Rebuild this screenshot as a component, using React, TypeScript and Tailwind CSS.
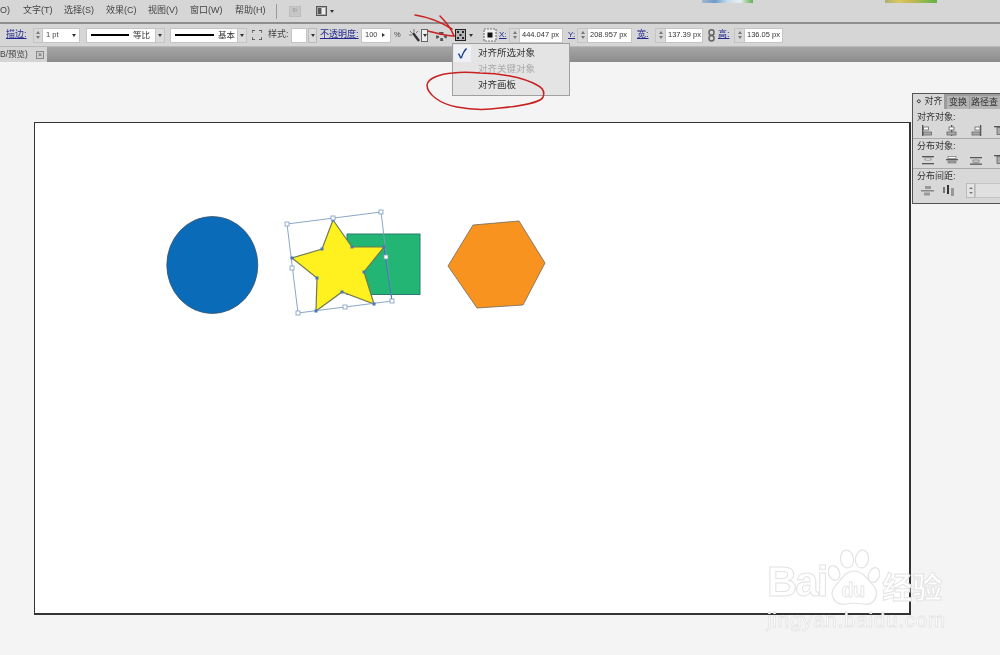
import React from "react";

const cjk = { fontFamily: '"Liberation Sans","Noto Sans CJK SC",sans-serif' };

function Spin({ w, text, ml }: { w: string; text: string; ml: string }) {
  return (
    <div className={`${w} ${ml} h-[15px] bg-white border border-[#c4c4c4] flex items-center shrink-0`}>
      <div className="w-[10px] h-full bg-[#d8d8d8] border-r border-[#c4c4c4] flex flex-col items-center justify-center gap-[2px]">
        <div className="w-0 h-0 border-x-[2px] border-x-transparent border-b-[3px] border-b-[#777]" />
        <div className="w-0 h-0 border-x-[2px] border-x-transparent border-t-[3px] border-t-[#777]" />
      </div>
      <span className="ml-[2px] text-[7.5px] text-[#333] whitespace-nowrap">{text}</span>
    </div>
  );
}

function Arrow({ className }: { className: string }) {
  return <div className={`w-0 h-0 border-x-[2.5px] border-x-transparent border-t-[3px] border-t-[#333] ${className}`} />;
}

function StrokeBox({ w, ml, label, thick, line }: { w: string; ml: string; label: string; thick: string; line: string }) {
  return (
    <div className={`${w} ${ml} h-[15px] flex shrink-0 border border-[#c4c4c4] bg-white`}>
      <div className="flex-1 flex items-center pl-[4px]">
        <div className={`${line} ${thick} bg-black shrink-0`} />
        <span className="ml-[4px] text-[8.5px] text-[#333]">{label}</span>
      </div>
      <div className="w-[9px] bg-[#dcdcdc] border-l border-[#c4c4c4] flex items-center justify-center">
        <Arrow className="" />
      </div>
    </div>
  );
}

function RefGlyph() {
  return (
    <svg width="14" height="14" viewBox="0 0 14 14" className="shrink-0">
      <rect x="1" y="1" width="12" height="12" fill="#f0f0f0" stroke="#777" strokeWidth="1.2" strokeDasharray="2 1" />
      <rect x="4.5" y="4.5" width="5" height="5" fill="#111" />
    </svg>
  );
}

function AlignKeyGlyph() {
  return (
    <svg width="11" height="12" viewBox="0 0 11 12" className="shrink-0">
      <rect x="0.5" y="0.5" width="10" height="11" fill="#b4b4b4" stroke="#222" strokeWidth="1" />
      <g fill="#222">
        <rect x="2" y="2" width="2" height="2" />
        <rect x="7" y="2" width="2" height="2" />
        <rect x="4.5" y="5" width="2" height="2" />
        <rect x="2" y="8" width="2" height="2" />
        <rect x="7" y="8" width="2" height="2" />
      </g>
    </svg>
  );
}

function PanelIcon({ kind }: { kind: number }) {
  return (
    <svg width="14" height="12" viewBox="0 0 14 12" className="shrink-0">
      {kind === 0 && <g><rect x="1" y="0" width="1.3" height="11" fill="#555" /><rect x="2.5" y="2" width="5" height="3" fill="#fff" stroke="#666" strokeWidth=".8" /><rect x="2.5" y="7" width="8" height="3" fill="#aaa" stroke="#666" strokeWidth=".8" /></g>}
      {kind === 1 && <g><rect x="6" y="0" width="1.3" height="11" fill="#555" /><rect x="4" y="2" width="5" height="3" fill="#fff" stroke="#666" strokeWidth=".8" /><rect x="2" y="7" width="9" height="3" fill="#aaa" stroke="#666" strokeWidth=".8" /></g>}
      {kind === 2 && <g><rect x="11" y="0" width="1.3" height="11" fill="#555" /><rect x="6" y="2" width="5" height="3" fill="#fff" stroke="#666" strokeWidth=".8" /><rect x="3" y="7" width="8" height="3" fill="#aaa" stroke="#666" strokeWidth=".8" /></g>}
      {kind === 3 && <g><rect x="1" y="1" width="12" height="1.3" fill="#555" /><rect x="4" y="2.5" width="6" height="7" fill="#aaa" stroke="#666" strokeWidth=".8" /></g>}
      {kind === 4 && <g><rect x="1" y="2" width="12" height="1.3" fill="#555" /><rect x="1" y="9" width="12" height="1.3" fill="#555" /><rect x="4" y="4" width="6" height="2" fill="#fff" stroke="#666" strokeWidth=".6" /></g>}
      {kind === 5 && <g><rect x="1" y="5" width="12" height="1.3" fill="#555" /><rect x="3" y="2.5" width="8" height="2" fill="#fff" stroke="#666" strokeWidth=".6" /><rect x="3" y="7" width="8" height="2" fill="#aaa" stroke="#666" strokeWidth=".6" /></g>}
      {kind === 6 && <g><rect x="1" y="9.5" width="12" height="1.3" fill="#555" /><rect x="1" y="3" width="12" height="1.3" fill="#555" /><rect x="4" y="6" width="6" height="2.5" fill="#ccc" stroke="#666" strokeWidth=".6" /></g>}
      {kind === 7 && <g><rect x="0" y="5" width="13" height="1.5" fill="#888" /><rect x="4" y="1" width="6" height="3" fill="#999" /><rect x="3" y="7.5" width="6" height="3" fill="#999" /></g>}
      {kind === 8 && <g><rect x="1" y="2" width="2" height="6" fill="#777" /><rect x="5" y="0" width="2" height="9" fill="#333" /><rect x="9" y="3" width="3" height="8" fill="#999" /></g>}
    </svg>
  );
}

export default function App() {
  return (
    <div className="relative w-[1000px] h-[655px] overflow-hidden bg-[#f4f4f4] select-none blur-[0.35px]" style={cjk}>
      {/* menu bar */}
      <div className="relative h-[24px] bg-[#d6d6d6] border-b-2 border-b-[#8e8e8e] flex items-center text-[9px] text-[#444] whitespace-nowrap">
        <span className="w-[23px] shrink-0">O)</span>
        <span className="w-[41px] shrink-0">文字(T)</span>
        <span className="w-[42px] shrink-0">选择(S)</span>
        <span className="w-[42px] shrink-0">效果(C)</span>
        <span className="w-[42px] shrink-0">视图(V)</span>
        <span className="w-[45px] shrink-0">窗口(W)</span>
        <span className="w-[41px] shrink-0">帮助(H)</span>
        <div className="w-px h-[15px] bg-[#9a9a9a] shrink-0" />
        <div className="ml-[12px] w-[12px] h-[11px] bg-[#c6c6c6] border border-[#bdbdbd] text-[5px] text-[#999] flex items-center justify-center shrink-0">Br</div>
        <div className="ml-[15px] w-[11px] h-[10px] border border-[#555] bg-[#aaa] flex gap-[1px] p-[1px] shrink-0">
          <div className="w-[4px] h-full bg-[#555]" />
          <div className="w-[3px] h-full bg-[#eee]" />
        </div>
        <Arrow className="ml-[3px]" />
        <div className="absolute left-[702px] top-0 w-[51px] h-[3px] bg-[linear-gradient(90deg,#9fb8d6,#6f9ac8,#c9dcec,#e8eef4,#62b04a)]" />
        <div className="absolute left-[885px] top-0 w-[52px] h-[3px] bg-[linear-gradient(90deg,#a8b070,#d8c860,#c8b850,#90b850,#62b04a)]" />
      </div>

      {/* options bar */}
      <div className="h-[22px] bg-[#d6d6d6] flex items-center text-[9px] text-[#444] whitespace-nowrap">
        <span className="ml-[6px] w-[21px] shrink-0 text-[#23288f] underline">描边:</span>
        <div className="ml-[6px] w-[47px] h-[15px] bg-white border border-[#c4c4c4] flex items-center shrink-0">
          <div className="w-[9px] h-full bg-[#d8d8d8] border-r border-[#c4c4c4] flex flex-col items-center justify-center gap-[2px]">
            <div className="w-0 h-0 border-x-[2px] border-x-transparent border-b-[3px] border-b-[#777]" />
            <div className="w-0 h-0 border-x-[2px] border-x-transparent border-t-[3px] border-t-[#777]" />
          </div>
          <span className="ml-[3px] text-[7.5px]">1 pt</span>
          <Arrow className="ml-auto mr-[3px]" />
        </div>
        <StrokeBox w="w-[79px]" ml="ml-[6px]" label="等比" thick="h-[1.5px]" line="w-[38px]" />
        <StrokeBox w="w-[77px]" ml="ml-[5px]" label="基本" thick="h-[2px]" line="w-[39px]" />
        <svg width="10" height="10" viewBox="0 0 10 10" className="ml-[5px] shrink-0">
          <path d="M0 3V0h3M7 0h3v3M10 7v3H7M3 10H0V7" fill="none" stroke="#444" strokeWidth="1.3" />
        </svg>
        <span className="ml-[6px] w-[23px] shrink-0">样式:</span>
        <div className="w-[16px] h-[15px] bg-white border border-[#c4c4c4] shrink-0" />
        <div className="ml-px w-[9px] h-[15px] bg-[#dcdcdc] border border-[#bbb] flex items-center justify-center shrink-0">
          <Arrow className="" />
        </div>
        <span className="ml-[3px] w-[41px] shrink-0 text-[#23288f] underline">不透明度:</span>
        <div className="w-[30px] h-[15px] bg-white border border-[#c4c4c4] flex items-center shrink-0">
          <span className="ml-[3px] w-[17px] text-[7.5px]">100</span>
          <div className="w-0 h-0 border-y-[2.5px] border-y-transparent border-l-[3px] border-l-[#333]" />
        </div>
        <span className="ml-[3px] w-[15px] shrink-0 text-[7.5px]">%</span>
        <svg width="12" height="13" viewBox="0 0 12 13" className="shrink-0">
          <path d="M1 2l2 2M5 0v3M9 2L7 4M0 6h3" stroke="#777" strokeWidth="1" />
          <path d="M4 4l6 8" stroke="#333" strokeWidth="2.4" />
        </svg>
        <div className="w-[7px] h-[13px] bg-[#eee] border border-[#666] flex items-center justify-center shrink-0">
          <Arrow className="" />
        </div>
        <div className="ml-[8px] w-[11px] h-[9px] mt-[3px] rounded-full border-[3px] border-dotted border-[#555] shrink-0" />
        <div className="ml-[8px] shrink-0"><AlignKeyGlyph /></div>
        <Arrow className="ml-[3px]" />
        <div className="ml-[10px] shrink-0"><RefGlyph /></div>
        <span className="w-[10px] ml-[2px] shrink-0 text-[#23288f] underline text-[8px]">X:</span>
        <Spin w="w-[54px]" ml="ml-0" text="444.047 px" />
        <span className="w-[9px] ml-[5px] shrink-0 text-[#23288f] underline text-[8px]">Y:</span>
        <Spin w="w-[55px]" ml="ml-0" text="208.957 px" />
        <span className="w-[13px] ml-[5px] shrink-0 text-[#23288f] underline">宽:</span>
        <Spin w="w-[48px]" ml="ml-[5px]" text="137.39 px" />
        <svg width="7" height="13" viewBox="0 0 7 13" className="ml-[5px] shrink-0">
          <rect x="1" y="0.8" width="5" height="5.5" rx="2.5" fill="none" stroke="#666" strokeWidth="1.5" />
          <rect x="1" y="6.5" width="5" height="5.5" rx="2.5" fill="none" stroke="#666" strokeWidth="1.5" />
        </svg>
        <span className="w-[13px] ml-[3px] shrink-0 text-[#23288f] underline">高:</span>
        <Spin w="w-[49px]" ml="ml-[3px]" text="136.05 px" />
      </div>

      {/* tab strip */}
      <div className="h-[16px] bg-[linear-gradient(#a6a6a6,#8c8c8c)] border-t border-t-[#b8b8b8] flex">
        <div className="w-[47px] h-full bg-[#d4d4d4] flex items-center text-[8.5px] text-[#444] whitespace-nowrap overflow-hidden">
          <span className="w-[36px] shrink-0 overflow-hidden">B/预览)</span>
          <div className="w-[8px] h-[8px] border border-[#888] bg-[#cfcfcf] text-[7px] leading-[6px] text-center text-[#555] shrink-0">×</div>
        </div>
      </div>

      {/* artboard */}
      <div className="ml-[34px] mt-[60px] w-[877px] h-[493px] bg-white border border-[#333] border-r-2 border-b-2">
        <svg width="875" height="490" viewBox="35 123 875 490" className="block">
          <ellipse cx="212.3" cy="265" rx="45.5" ry="48.5" fill="#0a6cb8" stroke="#38506b" strokeWidth="0.8" />
          <rect x="347" y="234" width="73" height="60.5" fill="#22b573" stroke="#2b7a78" strokeWidth="1" />
          <polygon points="448,266 473,225 519,221 545,263 523,305 477,308" fill="#f7931e" stroke="#6f6a60" strokeWidth="0.8" />
          <polygon points="333,220 352,247 384,247 364,272 374,304 342,292 316,311 317,278 292,258 322,249" fill="#fff01f" stroke="#6f7a50" strokeWidth="1.2" />
          <polygon points="287,224 381,212 392,301 298,313" fill="none" stroke="#7d9cc0" strokeWidth="0.9" />
          <path d="M384 247L392 301" stroke="#3f78b5" strokeWidth="1" />
          <g fill="#4a78b5">
            {[[333, 220], [352, 247], [384, 247], [364, 272], [374, 304], [342, 292], [316, 311], [317, 278], [292, 258], [322, 249]].map(([x, y]) => (
              <rect key={`${x}-${y}`} x={x - 1.5} y={y - 1.5} width="3" height="3" />
            ))}
          </g>
          <g fill="#fff" stroke="#7d9cc0" strokeWidth="0.8">
            {[[287, 224], [333, 218], [381, 212], [392, 301], [345, 307], [298, 313], [292, 268], [386, 257]].map(([x, y]) => (
              <rect key={`${x}-${y}`} x={x - 2} y={y - 2} width="4" height="4" />
            ))}
          </g>
        </svg>
      </div>

      {/* floating align panel */}
      <div className="absolute left-[912px] top-[93px] w-[92px] h-[111px] bg-[#d8d8d8] border border-[#555] text-[9px] text-[#333] whitespace-nowrap overflow-hidden">
        <div className="h-[15px] bg-[#9c9c9c] flex items-end text-[9px] text-[#333]">
          <div className="w-[31px] h-[15px] bg-[#d8d8d8] pl-[3px] leading-[15px]">⋄ 对齐</div>
          <div className="ml-[3px] w-[22px] h-[13px] bg-[#b4b4b4] leading-[13px] text-center">变换</div>
          <div className="ml-px pl-px h-[13px] leading-[13px] bg-[#b4b4b4] flex-1">路径查</div>
        </div>
        <div className="pl-[4px] leading-[11px] mt-[3px]">对齐对象:</div>
        <div className="flex gap-[10px] pl-[8px] mt-[2px]"><PanelIcon kind={0} /><PanelIcon kind={1} /><PanelIcon kind={2} /><PanelIcon kind={3} /></div>
        <div className="h-px bg-[#aaa] mt-[1px]" />
        <div className="pl-[4px] leading-[11px] mt-[2px]">分布对象:</div>
        <div className="flex gap-[10px] pl-[8px] mt-[2px]"><PanelIcon kind={4} /><PanelIcon kind={5} /><PanelIcon kind={6} /><PanelIcon kind={3} /></div>
        <div className="h-px bg-[#aaa] mt-[2px]" />
        <div className="pl-[4px] leading-[11px] mt-[2px]">分布间距:</div>
        <div className="flex items-center gap-[7px] pl-[8px] mt-[1px]">
          <PanelIcon kind={7} /><PanelIcon kind={8} />
          <div className="ml-[3px] w-[10px] h-[15px] bg-[#e4e4e4] border border-[#bbb] flex flex-col items-center justify-center gap-[3px]">
            <div className="w-0 h-0 border-x-[2px] border-x-transparent border-b-[2px] border-b-[#777]" />
            <div className="w-0 h-0 border-x-[2px] border-x-transparent border-t-[2px] border-t-[#777]" />
          </div>
          <div className="-ml-[7px] w-[30px] h-[15px] bg-[#e0e0e0] border border-[#c4c4c4]" />
        </div>
      </div>

      {/* dropdown menu */}
      <div className="absolute left-[452px] top-[43px] w-[118px] h-[53px] bg-[#e4e4e4] border border-[#a0a0a0] text-[9.5px] text-[#333] whitespace-nowrap">
        <div className="h-[17px] mt-[1px] flex items-center">
          <div className="w-[17px] h-[17px] ml-px bg-[#eef0f4] flex items-center justify-center text-[#1c3f94] text-[13px] font-bold">✓</div>
          <span className="ml-[7px]">对齐所选对象</span>
        </div>
        <div className="h-[15px] flex items-center pl-[25px] text-[#aaa]">对齐关键对象</div>
        <div className="h-[17px] flex items-center pl-[25px]">对齐画板</div>
      </div>

      {/* red annotations */}
      <svg width="1000" height="655" viewBox="0 0 1000 655" className="absolute left-0 top-0 pointer-events-none">
        <g fill="none" stroke="#c8211f" strokeWidth="1.5" strokeLinecap="round" strokeLinejoin="round">
          <path d="M415 15C428 17 441 22 452 29" />
          <path d="M440 16C446 22 451 28 454 36" />
          <path d="M428 31C436 33 446 36 454 36" />
          <path d="M453 73C440 74 428 78 427 85C427 94 440 104 457 107C472 110 487 110 500 108C520 106 542 102 543 97C545 92 543 88 537 85C530 81 520 78 510 76C500 74 490 73 480 73C470 72 460 72 453 73" />
        </g>
      </svg>

      {/* watermark */}
      <div className="absolute left-[767px] top-[548px] w-[200px] pointer-events-none">
        <div className="flex items-end h-[58px]">
          <span className="text-[42px] leading-[48px] font-bold tracking-[-2px] text-white [-webkit-text-stroke:1px_#e3e3e3] shrink-0" style={{ fontFamily: '"Liberation Sans",sans-serif' }}>Bai</span>
          <div className="relative w-[52px] h-[58px] shrink-0 ml-[2px]">
            <svg width="52" height="58" viewBox="0 0 52 58" className="absolute left-0 top-0">
              <g fill="#fff" stroke="#e3e3e3" strokeWidth="1.2">
                <ellipse cx="19" cy="11" rx="6.5" ry="9" transform="rotate(-8 19 11)" />
                <ellipse cx="34" cy="11" rx="6.5" ry="9" transform="rotate(8 34 11)" />
                <ellipse cx="6" cy="25" rx="5.5" ry="7.5" transform="rotate(-22 6 25)" />
                <ellipse cx="46" cy="27" rx="5.5" ry="7.5" transform="rotate(22 46 27)" />
                <path d="M26 23C17 23 14 31 7 38C0 47 7 58 18 56C23 55 29 55 35 56C46 58 52 47 46 38C39 31 35 23 26 23Z" />
              </g>
            </svg>
            <span className="absolute left-[13px] top-[31px] text-[20px] leading-[22px] text-white font-bold tracking-[-0.5px] [-webkit-text-stroke:0.8px_#e3e3e3]" style={{ fontFamily: '"Liberation Sans",sans-serif' }}>du</span>
          </div>
          <span className="ml-[2px] text-[30px] leading-[36px] font-bold whitespace-nowrap text-white [-webkit-text-stroke:1px_#e3e3e3] shrink-0">经验</span>
        </div>
        <div className="mt-[3px] text-[20.5px] leading-[22px] text-white whitespace-nowrap tracking-[0.8px] [-webkit-text-stroke:0.8px_#e3e3e3]" style={{ fontFamily: '"Liberation Sans",sans-serif' }}>jingyan.baidu.com</div>
      </div>
    </div>
  );
}
